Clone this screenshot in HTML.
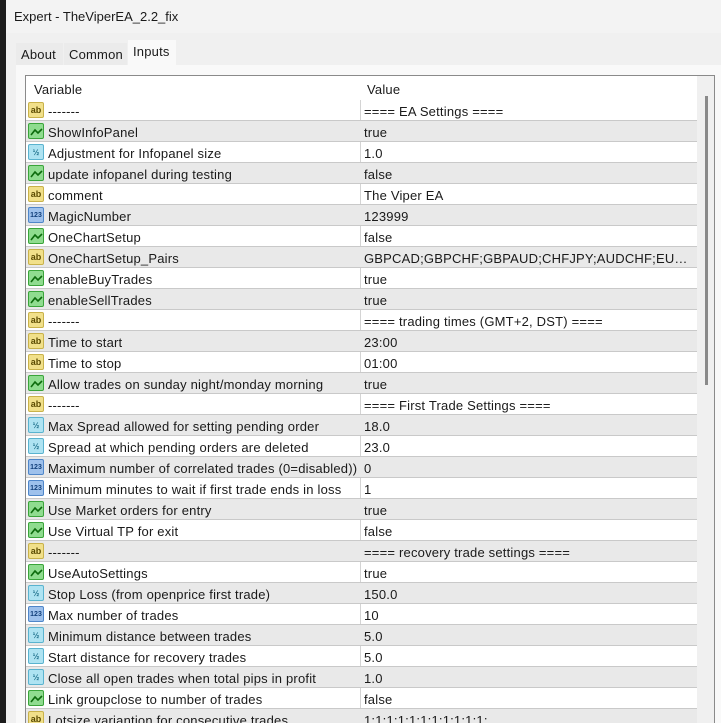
<!DOCTYPE html>
<html><head><meta charset="utf-8"><style>
*{margin:0;padding:0;box-sizing:border-box}
html,body{width:721px;height:723px;overflow:hidden}
body{background:#f0f0f0;font-family:"Liberation Sans","Noto Sans CJK SC",sans-serif;font-size:13px;letter-spacing:0.2px;color:#1a1a1a;position:relative}
.lstrip{position:absolute;left:0;top:0;width:6px;height:723px;background:#1c1c1c}
.win{position:absolute;left:6px;top:0;right:0;bottom:0;background:#f0f0f0;border-top-left-radius:6px}
.title{position:absolute;left:0;top:0;right:0;height:33px;background:#f3f3f3}
.title span{position:absolute;left:8px;top:9px;letter-spacing:0}
.tab{position:absolute;top:43px;height:22px;background:#ebebeb;padding:4px 0 0 5px}
.tab.act{background:#f9f9f9;top:40px;height:26px;padding-top:4px}
.panel{position:absolute;left:10px;top:65px;right:0;bottom:0;background:#f9f9f9}
.tbl{position:absolute;left:25px;top:75px;width:690px;height:660px;border:1px solid #8a8a8a;background:#fff;overflow:hidden}
.hdr{position:absolute;left:0;top:0;width:671px;height:24px;background:#fff}
.hdr span{position:absolute;top:6px}
.row{position:absolute;left:0;width:671px;height:21px;border-bottom:1px solid #c9c9c9}
.row.g{background:#e9e9e9}
.row .n{position:absolute;left:22px;top:4px;white-space:nowrap}
.row .v{position:absolute;left:338px;top:4px;width:330px;white-space:nowrap;overflow:hidden;text-overflow:ellipsis}
.col{position:absolute;left:334px;top:24px;width:1px;height:640px;background:#d4d4d4}
.ic{position:absolute;left:2px;top:2px;width:16px;height:16px;border-radius:2px;font-size:9px;line-height:15px;text-align:center;font-weight:bold;letter-spacing:0}
.ab{background:#f1e08a;border:1px solid #c9b24a;color:#5a4a00}
.d{background:#aee3f2;border:1px solid #5ab3cf;color:#1d6f8a;font-size:8px}
.i{background:#9ec1ec;border:1px solid #4f86c9;color:#123f7a;font-size:7px}
.b{background:#8fdc8f;border:1px solid #3aa43a}
.sb{position:absolute;left:671px;top:0;width:18px;height:660px;background:#f0f0f0}
.thumb{position:absolute;left:8px;top:20px;width:3px;height:289px;background:#8a8a8a}
</style></head><body>
<div class="lstrip"></div>
<div class="win">
<div class="title"><span>Expert - TheViperEA_2.2_fix</span></div>
<div class="tab" style="left:10px;width:47px">About</div>
<div class="tab" style="left:58px;width:63px">Common</div>
<div class="tab act" style="left:122px;width:48px">Inputs</div>
<div class="panel"></div>
</div>
<div class="tbl">
<div class="hdr"><span style="left:8px">Variable</span><span style="left:341px">Value</span></div>
<div class="col"></div>
<div class="sb"><div class="thumb"></div></div>
<div id="rows"></div>
</div>
<script>
var R=[["ab","-------","==== EA Settings ===="],["b","ShowInfoPanel","true"],["d","Adjustment for Infopanel size","1.0"],["b","update infopanel during testing","false"],["ab","comment","The Viper EA"],["i","MagicNumber","123999"],["b","OneChartSetup","false"],["ab","OneChartSetup_Pairs","GBPCAD;GBPCHF;GBPAUD;CHFJPY;AUDCHF;EURCHF;EURJPY;EURUSD"],["b","enableBuyTrades","true"],["b","enableSellTrades","true"],["ab","-------","==== trading times (GMT+2, DST) ===="],["ab","Time to start","23:00"],["ab","Time to stop","01:00"],["b","Allow trades on sunday night/monday morning","true"],["ab","-------","==== First Trade Settings ===="],["d","Max Spread allowed for setting pending order","18.0"],["d","Spread at which pending orders are deleted","23.0"],["i","Maximum number of correlated trades (0=disabled))","0"],["i","Minimum minutes to wait if first trade ends in loss","1"],["b","Use Market orders for entry","true"],["b","Use Virtual TP for exit","false"],["ab","-------","==== recovery trade settings ===="],["b","UseAutoSettings","true"],["d","Stop Loss (from openprice first trade)","150.0"],["i","Max number of trades","10"],["d","Minimum distance between trades","5.0"],["d","Start distance for recovery trades","5.0"],["d","Close all open trades when total pips in profit","1.0"],["b","Link groupclose to number of trades","false"],["ab","Lotsize variantion for consecutive trades","1;1;1;1;1;1;1;1;1;1;1;"]];
var L={ab:"ab",d:"½",i:"123",b:""};
var h="";
R.forEach(function(r,k){
var ic=r[0]=="b"?'<svg width="14" height="14" viewBox="0 0 14 14"><path d="M2 11 L6 6 L9 9 L13 5" stroke="#0d6b0d" stroke-width="1.6" fill="none"/></svg>':L[r[0]];
h+='<div class="row'+(k%2?' g':'')+'" style="top:'+(24+21*k)+'px"><div class="ic '+r[0]+'">'+ic+'</div><span class="n">'+r[1]+'</span><span class="v">'+r[2]+'</span></div>';
});
document.getElementById("rows").innerHTML=h;
</script>
</body></html>
